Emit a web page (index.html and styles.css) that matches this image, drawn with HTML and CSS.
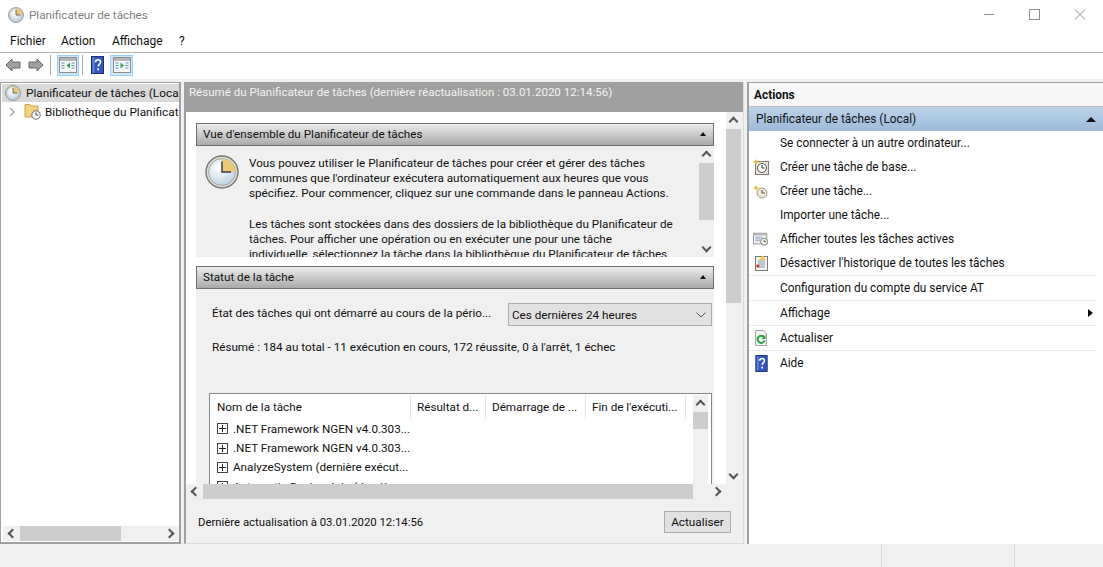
FILE: index.html
```html
<!DOCTYPE html>
<html lang="fr">
<head>
    <meta charset="UTF-8">
    <title>Planificateur de tâches</title>
    <link rel="stylesheet" href="styles.css">
</head>
<body>
    <svg class="defs" width="0" height="0">
        <defs>
            <radialGradient id="face" cx="40%" cy="35%" r="75%">
                <stop offset="0" stop-color="#ffffff"/>
                <stop offset="1" stop-color="#b9cfdf"/>
            </radialGradient>
            <symbol id="clock" viewBox="0 0 34 34">
                <circle cx="17" cy="17" r="16" fill="#dcdcd8" stroke="#77776f" stroke-width="1.4"/>
                <circle cx="17" cy="17" r="13.4" fill="url(#face)" stroke="#8a8f92" stroke-width=".7"/>
                <path d="M17 17V3.6A13.4 13.4 0 0 1 30.4 17Z" fill="#ecc877"/>
                <path d="M17 6.5V17H26" fill="none" stroke="#3a3f45" stroke-width="1.5"/>
            </symbol>
            <symbol id="help" viewBox="0 0 13 18">
                <rect x=".5" y=".5" width="12" height="17" fill="#3157bd" stroke="#1c2f70"/>
                <rect x="1.5" y="1.5" width="2" height="15" fill="#5a84de"/>
                <path d="M4.6 6.2C4.6 3 9.6 3 9.6 6c0 2-2.400 2.200-2.400 4.600" fill="none" stroke="#fff" stroke-width="1.600"/>
                <rect x="6.300" y="12.300" width="1.800" height="2" fill="#fff"/>
            </symbol>
            <symbol id="pane" viewBox="0 0 18 16">
                <rect x=".5" y=".5" width="17" height="15" fill="#f6f6f6" stroke="#8d8d8d"/>
                <rect x="1" y="1" width="16" height="3" fill="#b5b5b5"/>
                <path d="M2.500 6h3M2.500 8.500h3M2.500 11h3M12.500 6h3M12.500 8.500h3M12.500 11h3" stroke="#5f93c6"/>
            </symbol>
        </defs>
    </svg>

    <header class="titlebar">
        <svg class="title-icon"><use href="#clock"/></svg>
        <span class="title-text">Planificateur de tâches</span>
        <div class="window-buttons">
            <svg width="46" height="30" viewBox="0 0 46 30"><path d="M19 14.500h10" stroke="#8f8f8f"/></svg>
            <svg width="46" height="30" viewBox="0 0 46 30"><rect x="18.500" y="9.500" width="10" height="10" fill="none" stroke="#8f8f8f"/></svg>
            <svg width="46" height="30" viewBox="0 0 46 30"><path d="M18 9.500l10 10M28 9.500l-10 10" stroke="#8f8f8f"/></svg>
        </div>
    </header>

    <nav class="menubar">
        <span class="menu-item menu-fichier">Fichier</span>
        <span class="menu-item menu-action">Action</span>
        <span class="menu-item menu-affichage">Affichage</span>
        <span class="menu-item">?</span>
    </nav>

    <div class="toolbar">
        <svg class="tool-arrow" viewBox="0 0 16 14"><path d="M1 7l6-6v3h8v6H7v3Z" fill="#a0a0a0" stroke="#666"/></svg>
        <svg class="tool-arrow tool-arrow-next" viewBox="0 0 16 14"><path d="M15 7L9 1v3H1v6h8v3Z" fill="#a0a0a0" stroke="#666"/></svg>
        <span class="tool-sep"></span>
        <span class="tool-toggle">
            <svg class="pane-icon"><use href="#pane"/><path d="M11 5.500v6l-3.500-3Z" fill="#2ba84a"/></svg>
        </span>
        <span class="tool-sep tool-sep-second"></span>
        <svg class="tool-help"><use href="#help"/></svg>
        <span class="tool-toggle tool-toggle-right">
            <svg class="pane-icon"><use href="#pane"/><path d="M7.500 5.500v6l3.500-3Z" fill="#2ba84a"/></svg>
        </span>
    </div>

    <main class="panes">
        <aside class="tree-pane">
            <div class="tree-rows">
                <div class="tree-row tree-row-selected">
                    <svg class="tree-clock"><use href="#clock"/></svg>
                    <span>Planificateur de tâches (Local)</span>
                </div>
                <div class="tree-row">
                    <svg class="tree-chevron" viewBox="0 0 6 10"><path d="M1 1l4 4-4 4" fill="none" stroke="#a6a6a6" stroke-width="1.300"/></svg>
                    <svg class="tree-folder" viewBox="0 0 17 17">
                        <path d="M1 1.500h5l1 1.500h7v11H1Z" fill="#f2d27c" stroke="#c9a24e"/>
                        <circle cx="12" cy="12" r="4.200" fill="#f4f4f4" stroke="#6d6d6d"/>
                        <path d="M12 9.500V12h2.200" fill="none" stroke="#444"/>
                    </svg>
                    <span>Bibliothèque du Planificateur de tâches</span>
                </div>
            </div>
            <div class="hbar hbar-tree">
                <span class="arrow arrow-left"></span>
                <span class="hbar-thumb tree-thumb"></span>
                <span class="arrow arrow-right"></span>
            </div>
        </aside>

        <section class="center-pane">
            <div class="center-head">Résumé du Planificateur de tâches (dernière réactualisation : 03.01.2020 12:14:56)</div>
            <div class="center-scroll">
                <div class="center-content">
                    <div class="section-head">
                        <span>Vue d'ensemble du Planificateur de tâches</span>
                        <span class="collapse"></span>
                    </div>
                    <div class="overview">
                        <svg class="overview-clock"><use href="#clock"/></svg>
                        <div class="overview-text">
                            <p>Vous pouvez utiliser le Planificateur de tâches pour créer et gérer des tâches<br>communes que l'ordinateur exécutera automatiquement aux heures que vous<br>spécifiez. Pour commencer, cliquez sur une commande dans le panneau Actions.</p>
                            <p>Les tâches sont stockées dans des dossiers de la bibliothèque du Planificateur de<br>tâches. Pour afficher une opération ou en exécuter une pour une tâche<br>individuelle, sélectionnez la tâche dans la bibliothèque du Planificateur de tâches</p>
                        </div>
                        <div class="vbar vbar-overview">
                            <span class="vbar-arrow vbar-arrow-up"></span>
                            <span class="vbar-thumb overview-thumb"></span>
                            <span class="vbar-arrow vbar-arrow-down"></span>
                        </div>
                    </div>

                    <div class="section-head section-head-status">
                        <span>Statut de la tâche</span>
                        <span class="collapse"></span>
                    </div>
                    <div class="status">
                        <div class="status-filter">
                            <span class="status-label">État des tâches qui ont démarré au cours de la pério...</span>
                            <div class="select">
                                <span>Ces dernières 24 heures</span>
                                <svg width="10" height="6" viewBox="0 0 10 6"><path d="M.5.500L5 5 9.500.500" fill="none" stroke="#555"/></svg>
                            </div>
                        </div>
                        <div class="status-summary">Résumé : 184 au total - 11 exécution en cours, 172 réussite, 0 à l'arrêt, 1 échec</div>
                        <div class="task-list">
                            <div class="task-table">
                                <div class="task-head">
                                    <span class="col col-name">Nom de la tâche</span>
                                    <span class="col col-result">Résultat d...</span>
                                    <span class="col col-start">Démarrage de ...</span>
                                    <span class="col col-end">Fin de l'exécuti...</span>
                                </div>
                                <div class="task-row"><span class="plus"></span>.NET Framework NGEN v4.0.303...</div>
                                <div class="task-row"><span class="plus"></span>.NET Framework NGEN v4.0.303...</div>
                                <div class="task-row"><span class="plus"></span>AnalyzeSystem (dernière exécut...</div>
                                <div class="task-row"><span class="plus"></span>Automatic-Device-Join (dernièr...</div>
                            </div>
                            <div class="vbar vbar-list">
                                <span class="vbar-arrow vbar-arrow-up"></span>
                                <span class="vbar-thumb list-thumb"></span>
                            </div>
                        </div>
                    </div>
                </div>
                <div class="vbar vbar-center">
                    <span class="vbar-arrow vbar-arrow-up"></span>
                    <span class="vbar-thumb center-thumb"></span>
                    <span class="vbar-arrow vbar-arrow-down"></span>
                </div>
            </div>
            <div class="hbar hbar-center">
                <span class="arrow arrow-left"></span>
                <span class="hbar-thumb center-hthumb"></span>
                <span class="arrow arrow-right"></span>
            </div>
            <div class="center-foot">
                <span class="foot-text">Dernière actualisation à 03.01.2020 12:14:56</span>
                <button type="button" class="refresh-button">Actualiser</button>
            </div>
        </section>

        <aside class="actions-pane">
            <div class="actions-title">Actions</div>
            <div class="actions-group">
                <span>Planificateur de tâches (Local)</span>
                <span class="group-arrow"></span>
            </div>
            <ul class="action-list">
                <li class="action"><span class="action-icon"></span>Se connecter à un autre ordinateur...</li>
                <li class="action">
                    <svg class="action-icon" viewBox="0 0 16 16">
                        <rect x="2.500" y="2.500" width="13" height="13" fill="#e8e4da" stroke="#7e7a70"/>
                        <circle cx="9" cy="9" r="4.500" fill="#fff" stroke="#555"/>
                        <path d="M9 6v3h2.500" fill="none" stroke="#333"/>
                        <path d="M3 0l1 2 2 1-2 1-1 2-1-2-2-1 2-1Z" fill="#f0b93a"/>
                    </svg>
                    Créer une tâche de base...
                </li>
                <li class="action">
                    <svg class="action-icon" viewBox="0 0 16 16">
                        <circle cx="9" cy="10" r="5" fill="#efe7d0" stroke="#9a9a90"/>
                        <path d="M9 7v3h3" fill="none" stroke="#555"/>
                        <path d="M3 2l1 2 2 1-2 1-1 2-1-2-2-1 2-1Z" fill="#f0b93a"/>
                    </svg>
                    Créer une tâche...
                </li>
                <li class="action"><span class="action-icon"></span>Importer une tâche...</li>
                <li class="action">
                    <svg class="action-icon" viewBox="0 0 18 16">
                        <rect x=".5" y="1.500" width="15" height="12" fill="#f6f6f6" stroke="#8d8d8d"/>
                        <rect x="1" y="2" width="14" height="2" fill="#b5b5b5"/>
                        <path d="M2.500 6h8M2.500 8h6M2.500 10h6" stroke="#7f9fc0"/>
                        <circle cx="12.500" cy="11" r="4" fill="#f4f0e0" stroke="#777"/>
                        <path d="M12.500 9v2h2" fill="none" stroke="#444"/>
                    </svg>
                    Afficher toutes les tâches actives
                </li>
                <li class="action action-sep">
                    <svg class="action-icon" viewBox="0 0 16 16">
                        <rect x="2.500" y="1.500" width="12" height="14" fill="#f2f2ee" stroke="#777"/>
                        <path d="M5 6h7M5 8h7M7 10h5M7 12h5" stroke="#7f9fc0"/>
                        <path d="M9.500 0l3 5h-6Z" fill="#f5c93a"/>
                        <rect x="3.500" y="9.500" width="3" height="3" fill="#c8322b"/>
                    </svg>
                    Désactiver l'historique de toutes les tâches
                </li>
                <li class="action action-sep"><span class="action-icon"></span>Configuration du compte du service AT</li>
                <li class="action action-sep">
                    <span class="action-icon"></span>Affichage
                    <span class="submenu-arrow"></span>
                </li>
                <li class="action action-sep">
                    <svg class="action-icon" viewBox="0 0 16 16">
                        <path d="M2.500.500h8l3 3v12h-11Z" fill="#f4f4f4" stroke="#a5a5a5"/>
                        <path d="M11 7a3.600 3.600 0 1 0 .6 3.500" fill="none" stroke="#2ba03f" stroke-width="2"/>
                        <path d="M12.500 5v4h-4Z" fill="#2ba03f"/>
                    </svg>
                    Actualiser
                </li>
                <li class="action">
                    <svg class="action-icon action-help"><use href="#help"/></svg>
                    Aide
                </li>
            </ul>
        </aside>
    </main>

    <footer class="statusbar">
        <span class="status-cell status-cell-wide"></span>
        <span class="status-cell status-cell-mid"></span>
        <span class="status-cell"></span>
    </footer>
</body>
</html>
```

FILE: styles.css
```css
* {
    box-sizing: border-box;
}
html, body {
    height: 100%;
}
body {
    margin: 0;
    display: flex;
    flex-direction: column;
    overflow: hidden;
    background: #fff;
    color: #111;
    font: 12px/16px Roboto, "Liberation Sans", sans-serif;
}
.defs {
    display: block;
    flex: none;
}

/* window chrome */
.titlebar {
    height: 30px;
    flex: none;
    display: flex;
    align-items: center;
    padding-left: 8px;
}
.title-icon {
    width: 16px;
    height: 16px;
}
.title-text {
    margin-left: 5px;
    color: #808080;
    font-size: 11.700px;
}
.window-buttons {
    margin-left: auto;
    display: flex;
}
.window-buttons svg {
    display: block;
}
.menubar {
    height: 23px;
    flex: none;
    display: flex;
    align-items: center;
    padding: 0 0 1px 10px;
    border-bottom: 1px solid #b4b4b4;
}
.menu-fichier { width: 51px; }
.menu-action { width: 51px; }
.menu-affichage { width: 67px; }

.toolbar {
    height: 26px;
    flex: none;
    display: flex;
    align-items: center;
    padding: 0 0 2px 5px;
}
.tool-arrow {
    width: 16px;
    height: 14px;
}
.tool-arrow-next {
    margin-left: 7px;
}
.tool-sep {
    width: 1px;
    height: 20px;
    margin-left: 6px;
    background: #a8a8a8;
}
.tool-sep-second {
    margin-left: 3px;
}
.tool-toggle {
    width: 22px;
    height: 21px;
    margin-left: 6px;
    display: flex;
    align-items: center;
    justify-content: center;
    background: #cce8ff;
    border: 1px solid #99d1ff;
}
.tool-toggle-right {
    width: 23px;
}
.pane-icon {
    width: 18px;
    height: 16px;
}
.tool-help {
    width: 13px;
    height: 18px;
    margin-left: 8px;
}

/* three panes */
.panes {
    flex: 1;
    min-height: 0;
    display: flex;
    padding: 3px 0 0;
    background: #f0f0f0;
}
.tree-pane {
    width: 181px;
    flex: none;
    display: flex;
    flex-direction: column;
    background: #fff;
    border: 1px solid #a0a0a0;
    border-width: 1px 2px 2px 1px;
    padding: 1px 0 1px 1px;
    font-size: 11.800px;
}
.tree-rows {
    flex: 1;
    overflow: hidden;
}
.tree-row {
    height: 19px;
    display: flex;
    align-items: center;
    white-space: nowrap;
    overflow: hidden;
    padding-left: 7px;
}
.tree-row-selected {
    height: 18px;
    padding-left: 3px;
    background: #d9d9d9;
}
.tree-clock {
    width: 16px;
    height: 16px;
    flex: none;
    margin-right: 5px;
}
.tree-chevron {
    width: 6px;
    height: 10px;
    flex: none;
    margin-right: 9px;
}
.tree-folder {
    width: 17px;
    height: 17px;
    flex: none;
    margin-right: 4px;
}

/* scrollbars */
.hbar {
    height: 15px;
    flex: none;
    display: flex;
    align-items: center;
    background: #f0f0f0;
}
.arrow {
    width: 17px;
    height: 15px;
    flex: none;
    display: flex;
    align-items: center;
    justify-content: center;
}
.arrow::before {
    content: "";
    width: 5px;
    height: 5px;
    border-left: 2px solid #555;
    border-top: 2px solid #555;
}
.arrow-left::before {
    transform: translateX(1px) rotate(-45deg);
}
.arrow-right {
    margin-left: auto;
}
.arrow-right::before {
    transform: translateX(-1px) rotate(135deg);
}
.hbar-thumb {
    height: 15px;
    background: #cdcdcd;
}
.hbar-tree {
    margin-left: 1px;
}
.tree-thumb {
    width: 101px;
}
.vbar {
    width: 15px;
    flex: none;
    display: flex;
    flex-direction: column;
    background: #f0f0f0;
}
.vbar-arrow {
    height: 17px;
    flex: none;
    display: flex;
    align-items: center;
    justify-content: center;
}
.vbar-arrow::before {
    content: "";
    width: 5px;
    height: 5px;
    border-left: 2px solid #555;
    border-top: 2px solid #555;
}
.vbar-arrow-up::before {
    transform: translateY(1px) rotate(45deg);
}
.vbar-arrow-down {
    margin-top: auto;
}
.vbar-arrow-down::before {
    transform: translateY(-1px) rotate(225deg);
}
.vbar-thumb {
    flex: none;
    background: #cdcdcd;
}
.center-thumb { height: 174px; }
.overview-thumb { height: 57px; }
.list-thumb { height: 17px; }

/* center pane */
.center-pane {
    width: 560px;
    flex: none;
    margin-left: 3px;
    display: flex;
    flex-direction: column;
    border-left: 2px solid #a0a0a0;
    border-bottom: 1px solid #dcdcdc;
    border-right: 1px solid #dcdcdc;
    font-size: 11.700px;
}
.center-head {
    height: 30px;
    flex: none;
    padding: 2px 0 0 3px;
    background: #a0a0a0;
    color: #f2f2f2;
    font-size: 11.550px;
    line-height: 17px;
    white-space: nowrap;
}
.center-scroll {
    height: 372px;
    flex: none;
    display: flex;
    padding-right: 2px;
}
.center-content {
    flex: 1;
    min-width: 0;
    padding: 11px 12px 0 10px;
    overflow: hidden;
    background: #fff;
}
.section-head {
    height: 23px;
    display: flex;
    align-items: center;
    justify-content: space-between;
    padding: 0 7px 1px 6px;
    border: 1px solid #6f6f6f;
    background: linear-gradient(#ececec, #a9a9a9);
}
.section-head-status {
    margin-top: 9px;
}
.collapse {
    width: 0;
    height: 0;
    border: 3px solid transparent;
    border-top: 0;
    border-bottom: 4px solid #111;
}
.overview {
    height: 111px;
    display: flex;
    overflow: hidden;
    background: #f0f0f0;
}
.overview-clock {
    width: 34px;
    height: 34px;
    flex: none;
    margin: 9px 10px 0 9px;
}
.overview-text {
    flex: 1;
    min-width: 0;
    padding-top: 10px;
    line-height: 15.200px;
    white-space: nowrap;
    overflow: hidden;
}
.overview-text p {
    margin: 0 0 15px;
}
.vbar-overview {
    height: 111px;
}
.status {
    height: 200px;
    background: #f0f0f0;
    padding: 14px 2px 0 16px;
}
.status-filter {
    display: flex;
    align-items: flex-start;
    justify-content: space-between;
    white-space: nowrap;
}
.status-label {
    padding-top: 2px;
}
.select {
    width: 204px;
    height: 23px;
    display: flex;
    align-items: center;
    justify-content: space-between;
    padding: 0 5px 0 3px;
    background: #e1e1e1;
    border: 1px solid #adadad;
}
.status-summary {
    margin-top: 13px;
}
.task-list {
    height: 93px;
    margin: 38px 0 0 -3px;
    display: flex;
    overflow: hidden;
    background: #fff;
    border: 1px solid #828790;
    border-bottom: 0;
    padding: 0 3px 0 0;
}
.task-table {
    flex: 1;
    min-width: 0;
    overflow: hidden;
}
.task-head {
    height: 25px;
    display: flex;
    align-items: center;
}
.col {
    height: 24px;
    display: flex;
    align-items: center;
    padding-left: 6px;
    white-space: nowrap;
    border-right: 1px solid #e5e5e5;
}
.col-name { width: 201px; padding-left: 7px; }
.col-result { width: 75px; }
.col-start { width: 100px; }
.col-end { width: 100px; }
.vbar-list {
    height: 92px;
    margin-top: 1px;
}
.task-row {
    height: 19.400px;
    display: flex;
    align-items: center;
    padding-left: 7px;
    white-space: nowrap;
}
.plus {
    width: 11px;
    height: 11px;
    flex: none;
    margin-right: 5px;
    border: 1px solid #444;
    background: linear-gradient(#222, #222) center / 7px 1px no-repeat,
        linear-gradient(#222, #222) center / 1px 7px no-repeat;
}
.hbar-center {
    width: 540px;
}
.center-hthumb {
    width: 490px;
}
.center-foot {
    flex: 1;
    display: flex;
    align-items: center;
    justify-content: space-between;
    padding: 1px 12px 0 12px;
}
.foot-text {
    font-size: 11.350px;
}
.refresh-button {
    width: 67px;
    height: 22px;
    padding: 0;
    background: #e1e1e1;
    border: 1px solid #adadad;
    color: #111;
    font: inherit;
    font-size: 11.800px;
}

/* actions */
.actions-pane {
    flex: 1;
    min-width: 0;
    margin-left: 3px;
    background: #fff;
    border-left: 2px solid #a0a0a0;
    border-top: 1px solid #a0a0a0;
    font-size: 11.850px;
}
.actions-title {
    height: 24px;
    display: flex;
    align-items: center;
    padding-left: 5px;
    font-weight: 700;
    border-bottom: 1px solid #bdbdbd;
    background: #f7f7f7;
}
.actions-group {
    height: 24px;
    display: flex;
    align-items: center;
    justify-content: space-between;
    padding: 0 7px;
    background: linear-gradient(#bcd3e9, #9cbbd8);
}
.group-arrow {
    width: 0;
    height: 0;
    border: 5px solid transparent;
    border-top: 0;
    border-bottom: 5px solid #111;
}
.action-list {
    list-style: none;
    margin: 0;
    padding: 0 7px 0 0;
}
.action {
    height: 24px;
    display: flex;
    align-items: center;
    white-space: nowrap;
}
.action-sep {
    height: 25px;
    border-bottom: 1px solid #e9e9e9;
}
.action-icon {
    width: 16px;
    height: 16px;
    flex: none;
    margin: 0 11px 0 4px;
}
.action-help {
    width: 13px;
    height: 17px;
    margin: 0 12px 0 6px;
}
.submenu-arrow {
    width: 0;
    height: 0;
    margin-left: auto;
    margin-right: 3px;
    border: 4px solid transparent;
    border-right: 0;
    border-left: 5px solid #111;
}

.statusbar {
    height: 23px;
    flex: none;
    display: flex;
    background: #f0f0f0;
}
.status-cell {
    flex: 1;
}
.status-cell-wide {
    flex: none;
    width: 882px;
    border-right: 1px solid #dcdcdc;
}
.status-cell-mid {
    flex: none;
    width: 133px;
    border-right: 1px solid #dcdcdc;
}
```
